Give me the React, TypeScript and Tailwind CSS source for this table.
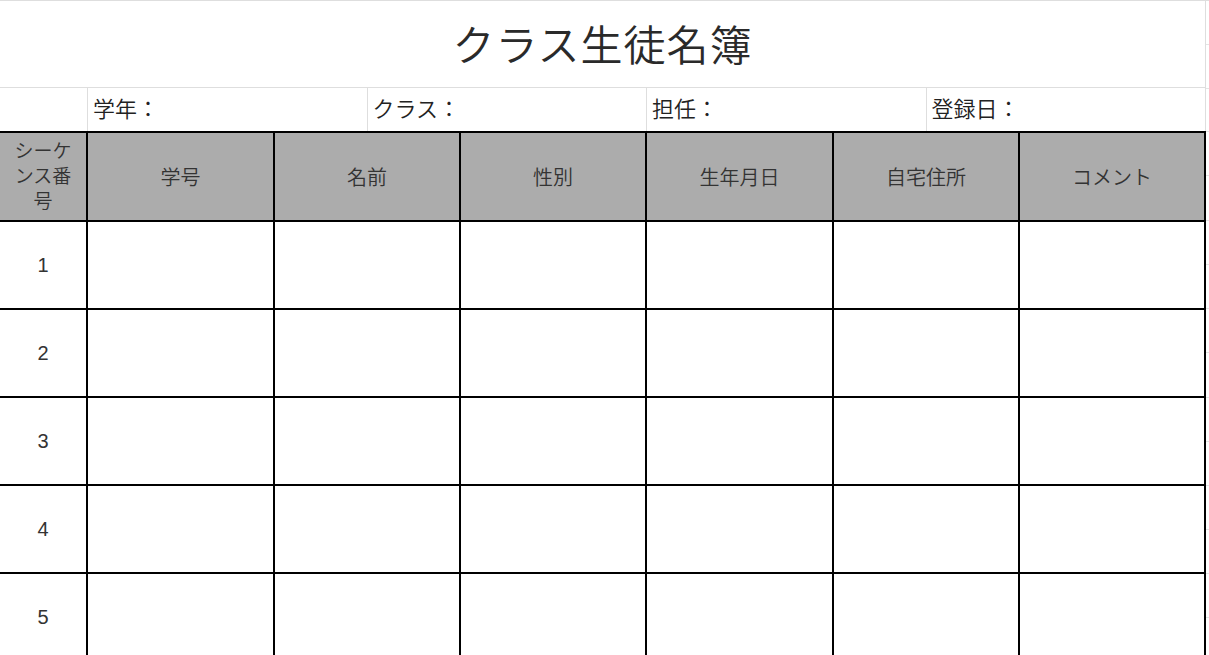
import React from 'react';

const headers = ['学号', '名前', '性別', '生年月日', '自宅住所', 'コメント'];
const rows = [1, 2, 3, 4, 5];
const infos = ['学年：', 'クラス：', '担任：', '登録日：'];
const stripRows = [44, 44, 43, 44, 45, 44, 44, 44, 45, 44, 44, 44, 44, 44, 45, 44];

export default function App() {
  return (
    <div
      className="flex w-[1209px] h-[655px] overflow-hidden bg-white text-[#222] font-[350]"
      style={{ fontFamily: '"Liberation Sans", "Noto Sans CJK JP", sans-serif' }}
    >
      {/* Sheet */}
      <div className="w-[1206px] shrink-0 flex flex-col">
        {/* Title */}
        <div className="h-[88px] shrink-0 border-t border-b border-r border-[#dedede] flex items-center justify-center">
          <h1 className="text-[42px] leading-none text-[#2a2a2a] pt-[6px] tracking-[1px]">クラス生徒名簿</h1>
        </div>

        {/* Info row */}
        <div className="h-[43px] shrink-0 flex border-r border-[#dedede]">
          <div className="w-[87px] shrink-0" />
          {infos.map((t) => (
            <div key={t} className="w-[279.5px] shrink-0 border-l border-[#dedede] flex items-center pl-[5px] text-[22px]">
              {t}
            </div>
          ))}
        </div>

        {/* Table */}
        <div className="grid grid-cols-[88px_187px_186px_186px_187px_186px_186px] border-t-2 border-black">
          <div className="h-[89px] bg-[#acacac] border-r-2 border-b-2 border-black flex items-center justify-center text-center text-[19px] leading-[25px] text-[#333]">
            シーケ<br />ンス番<br />号
          </div>
          {headers.map((h) => (
            <div key={h} className="h-[89px] bg-[#acacac] border-r-2 border-b-2 border-black flex items-center justify-center text-[20px] text-[#333] pt-[2px]">
              {h}
            </div>
          ))}
          {rows.map((n) => (
            <React.Fragment key={n}>
              <div className="h-[88px] border-r-2 border-b-2 border-black flex items-center justify-center text-[20px] font-normal text-[#333]">
                {n}
              </div>
              {headers.map((h) => (
                <div key={h} className="h-[88px] border-r-2 border-b-2 border-black" />
              ))}
            </React.Fragment>
          ))}
        </div>
      </div>

      {/* Next spreadsheet column */}
      <div className="flex-1 flex flex-col border-t border-[#dedede]">
        {stripRows.map((h, i) => (
          <div key={i} className="shrink-0 border-b border-[#e4e4e4]" style={{ height: h }} />
        ))}
      </div>
    </div>
  );
}
